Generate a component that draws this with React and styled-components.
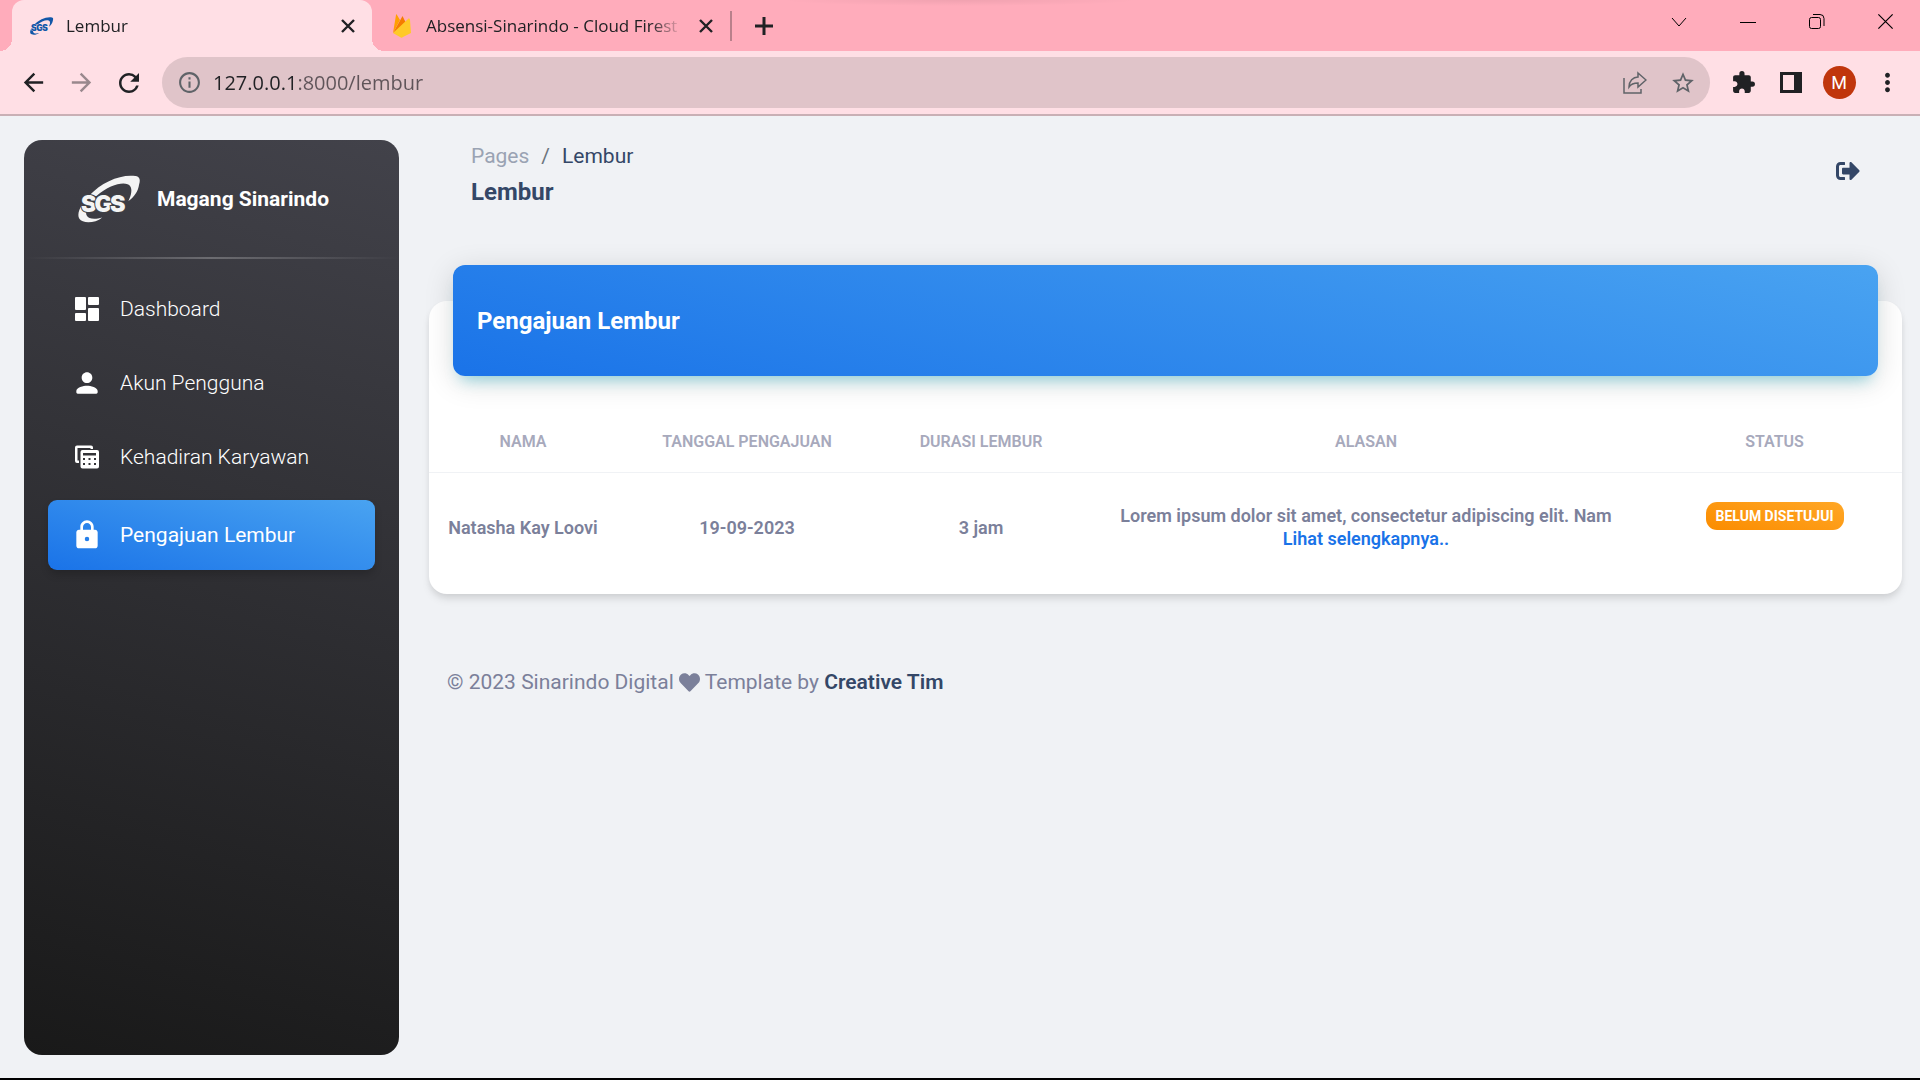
import React from 'react'
import styled, { createGlobalStyle, css } from 'styled-components'
import {
  MdArrowBack,
  MdArrowForward,
  MdRefresh,
  MdInfoOutline,
  MdStarOutline,
  MdExtension,
  MdMoreVert,
} from 'react-icons/md'
import { FaHeart, FaSignOutAlt } from 'react-icons/fa'

const GlobalStyle = createGlobalStyle`
  * {
    box-sizing: border-box;
  }

  body {
    background: #f0f2f5;
    font-family: Roboto, 'Liberation Sans', sans-serif;
    margin: 0;
  }

  button,
  input {
    background: none;
    border: 0;
    color: inherit;
    font-family: inherit;
    padding: 0;
  }

  a {
    color: inherit;
    text-decoration: none;
  }
`

const Window = styled.div`
  border-bottom: 2px solid #000;
  display: flex;
  flex-direction: column;
  min-height: 100vh;
`

/* Browser chrome */

const TabStrip = styled.div`
  background:
    radial-gradient(
      ellipse 180px 6px at 50% 0,
      rgba(0, 0, 0, 0.06),
      transparent
    ),
    #ffacbb;
  color: #202124;
  display: flex;
  font-family: 'Open Sans', 'Noto Sans', sans-serif;
  height: 51px;
  padding-left: 12px;
`

const Tab = styled.div`
  align-items: center;
  display: flex;
  gap: 12px;
  padding: 0 12px 0 18px;
  position: relative;
  width: ${({ $active }) => ($active ? 360 : 358)}px;

  ${({ $active }) =>
    $active &&
    css`
      background: #ffdfe5;
      border-radius: 12px 12px 0 0;

      &::before,
      &::after {
        bottom: 0;
        content: '';
        height: 12px;
        position: absolute;
        width: 12px;
      }

      &::before {
        background: radial-gradient(circle at 0 0, #ffacbb 12px, #ffdfe5 12px);
        right: 100%;
      }

      &::after {
        background: radial-gradient(
          circle at 100% 0,
          #ffacbb 12px,
          #ffdfe5 12px
        );
        left: 100%;
      }
    `}
`

const TabTitle = styled.span`
  flex: 1;
  font-size: 17px;
  mask-image: linear-gradient(to left, transparent, #000 32px);
  white-space: nowrap;
`

const TabClose = styled.button`
  display: flex;
  padding: 4px;
`

const TabDivider = styled.div`
  align-self: center;
  background: #b9808b;
  height: 30px;
  width: 2px;
`

const NewTab = styled.button`
  align-items: center;
  display: flex;
  justify-content: center;
  width: 64px;
`

const WindowControls = styled.div`
  color: #000;
  display: flex;
  margin-left: auto;
`

const WindowButton = styled.button`
  align-items: center;
  display: flex;
  height: 43px;
  justify-content: center;
  width: 69px;
`

const Toolbar = styled.div`
  align-items: center;
  background: #ffdfe5;
  border-bottom: 2px solid #c9b0b5;
  color: #202124;
  display: flex;
  font-family: 'Open Sans', 'Noto Sans', sans-serif;
  height: 65px;
  padding: 0 9px;
`

const ToolButton = styled.button`
  align-items: center;
  display: flex;
  flex-shrink: 0;
  height: 48px;
  justify-content: center;
  opacity: ${({ disabled }) => (disabled ? 0.45 : 1)};
  width: 48px;
`

const AddressBar = styled.form`
  align-items: center;
  background: #e0c4c9;
  border-radius: 26px;
  color: #5f6368;
  display: flex;
  flex: 1;
  height: 51px;
  margin: 0 9px;
  padding: 0 3px;
`

const AddressInput = styled.input`
  background: linear-gradient(to right, #202124 80px, #5f5459 80px);
  background-clip: text;
  -webkit-text-fill-color: transparent;
  flex: 1;
  font-size: 20px;
  min-width: 0;
  outline: 0;
`

const Avatar = styled.span`
  background: #c0360c;
  border-radius: 50%;
  color: #fff;
  font-family: Roboto, sans-serif;
  font-size: 18px;
  height: 33px;
  line-height: 33px;
  width: 33px;
`

/* Page */

const Page = styled.div`
  display: flex;
  flex: 1;
  padding: 24px 18px 23px 24px;
`

const Sidebar = styled.aside`
  background: linear-gradient(195deg, #42424a, #191919);
  border-radius: 18px;
  color: #fff;
  flex-shrink: 0;
  width: 375px;
`

const Brand = styled.a`
  align-items: center;
  display: flex;
  font-size: 21px;
  font-weight: 700;
  gap: 15px;
  height: 117px;
  padding-left: 54px;
`

const SidebarDivider = styled.hr`
  background: linear-gradient(90deg, transparent, #fff, transparent);
  border: 0;
  height: 2px;
  margin: 0 0 15px;
  opacity: 0.25;
`

const Nav = styled.nav`
  display: flex;
  flex-direction: column;
  gap: 4px;
  padding: 0 24px;
`

const NavItem = styled.a`
  align-items: center;
  border-radius: 9px;
  display: flex;
  font-size: 21px;
  font-weight: ${({ $active }) => ($active ? 400 : 300)};
  gap: 17px;
  height: 70px;
  padding-left: 23px;

  ${({ $active }) =>
    $active &&
    css`
      background: linear-gradient(195deg, #49a3f1, #1a73e8);
      box-shadow: 0 5px 8px -1px rgba(0, 0, 0, 0.2);
      margin-top: 4px;
    `}
`

const Main = styled.main`
  flex: 1;
  margin-left: 30px;
  min-width: 0;
`

const TopBar = styled.header`
  align-items: center;
  color: #344767;
  display: flex;
  justify-content: space-between;
  padding: 0 42px;
`

const Breadcrumb = styled.nav`
  display: flex;
  font-size: 21px;
  gap: 12px;
  line-height: 32px;
`

const Muted = styled.a`
  color: #9aa3b3;
`

const Slash = styled.span`
  color: #6c757d;
`

const PageTitle = styled.h1`
  font-size: 24px;
  font-weight: 700;
  line-height: 40px;
  margin: 0;
`

const LogoutButton = styled.button`
  display: flex;
  padding-bottom: 10px;
`

const Card = styled.section`
  background: #fff;
  border-radius: 18px;
  box-shadow:
    0 6px 9px -1px rgba(0, 0, 0, 0.1),
    0 3px 6px -1px rgba(0, 0, 0, 0.06);
  margin-top: 89px;
  padding-bottom: 12px;
`

const CardHeader = styled.div`
  background: linear-gradient(195deg, #49a3f1, #1a73e8);
  border-radius: 12px;
  box-shadow:
    0 6px 30px 0 rgba(0, 0, 0, 0.14),
    0 11px 15px -8px rgba(0, 188, 212, 0.4);
  color: #fff;
  margin: 0 24px;
  padding: 36px 24px 34px;
  position: relative;
  top: -36px;
`

const CardTitle = styled.h2`
  font-size: 24px;
  font-weight: 700;
  line-height: 41px;
  margin: 0;
`

const Table = styled.table`
  border-collapse: collapse;
  table-layout: fixed;
  text-align: center;
  width: 100%;
`

const Column = styled.col`
  width: ${({ $width }) => $width};
`

const HeaderCell = styled.th`
  border-bottom: 1px solid #f0f2f5;
  color: #a7a9bc;
  font-size: 16px;
  font-weight: 600;
  height: 60px;
  padding: 0;
  text-transform: uppercase;
`

const Cell = styled.td`
  color: #7b809a;
  font-size: 18px;
  font-weight: 600;
  height: 110px;
  line-height: 23px;
  padding: 0 12px;
`

const MoreLink = styled.a`
  color: #1a73e8;
  display: block;
`

const Badge = styled.span`
  background: linear-gradient(195deg, #ffa726, #fb8c00);
  border-radius: 11px;
  color: #fff;
  display: inline-block;
  font-size: 14px;
  font-weight: 700;
  line-height: 28px;
  margin-bottom: 23px;
  padding: 0 10px;
  text-transform: uppercase;
`

const Footer = styled.footer`
  align-items: center;
  color: #7b809a;
  display: flex;
  font-size: 21px;
  gap: 5px;
  line-height: 32px;
  padding: 72px 18px 0;
`

const FooterLink = styled.a`
  color: #344767;
  font-weight: 600;
`

const Cross = ({ size, strokeWidth }) => (
  <svg
    fill="none"
    height={size}
    stroke="currentColor"
    strokeWidth={strokeWidth}
    viewBox="0 0 16 16"
    width={size}
  >
    <path d="M2 2l12 12M14 2L2 14" />
  </svg>
)

const Logo = ({ color, outline, width, height }) => (
  <svg height={height} viewBox="0 0 66 50" width={width}>
    <path
      d="M11 22C24 8 42 0 57 1c6 0 8 3 6 9-1 7-5 13-11 17 3-6 4-12 2-15C50 6 34 9 19 22z"
      fill={color}
    />
    <path
      d="M4 31C0 38-2 45 5 48c5 2 14 1 20-4-7 2-14 2-16-2-1-2-1-5 1-8z"
      fill={color}
    />
    <text
      fill={color}
      fontFamily="Inter, sans-serif"
      fontSize="24"
      fontWeight="900"
      paintOrder="stroke"
      stroke={outline}
      strokeWidth="2"
    >
      <tspan x="3" y="38">
        S
      </tspan>
      <tspan x="17" y="38">
        G
      </tspan>
      <tspan x="33" y="38">
        S
      </tspan>
    </text>
  </svg>
)

const Firebase = () => (
  <svg height="24" viewBox="-3 0 24 24" width="24">
    <path d="M0 19L3 1c0-1 1-1 1 0l3 5z" fill="#ffa000" />
    <path d="M0 19L9 3c0-1 1-1 1 0l3 6z" fill="#f57c00" />
    <path
      d="M0 19L15 5c1-1 2 0 2 1l1 13-8 4c-1 1-2 1-3 0z"
      fill="#ffca28"
    />
  </svg>
)

const DashboardIcon = () => (
  <svg fill="currentColor" height="32" viewBox="0 0 32 32" width="32">
    <rect height="13" rx="1" width="11" x="4" y="4" />
    <rect height="8" rx="1" width="11" x="4" y="20" />
    <rect height="8" rx="1" width="11" x="17" y="4" />
    <rect height="13" rx="1" width="11" x="17" y="15" />
  </svg>
)

const PersonIcon = () => (
  <svg fill="currentColor" height="32" viewBox="0 0 24 24" width="32">
    <path d="M12 12c2.21 0 4-1.79 4-4s-1.79-4-4-4-4 1.79-4 4 1.79 4 4 4zm0 2c-2.67 0-8 1.34-8 4v1c0 .55.45 1 1 1h14c.55 0 1-.45 1-1v-1c0-2.66-5.33-4-8-4z" />
  </svg>
)

const TableIcon = () => (
  <svg fill="currentColor" height="32" viewBox="0 0 32 32" width="32">
    <path d="M7 22H6a2 2 0 0 1-2-2V6.500a2 2 0 0 1 2-2h14a2 2 0 0 1 2 2V8h-2.500V7H6.500v12.500H8V22z" />
    <path
      clipRule="evenodd"
      d="M11.500 9H26a2 2 0 0 1 2 2v14.500a2 2 0 0 1-2 2H11.500a2 2 0 0 1-2-2V11a2 2 0 0 1 2-2zM12 12v2.500h13V12zM12 17v2h2v-2zM17.500 17v2h2v-2zM23 17v2h2v-2zM12 22v2h2v-2zM17.500 22v2h2v-2zM23 22v2h2v-2z"
      fillRule="evenodd"
    />
  </svg>
)

const LockIcon = () => (
  <svg fill="currentColor" height="32" viewBox="0 0 24 24" width="32">
    <path d="M18 8h-1V6c0-2.760-2.240-5-5-5S7 3.240 7 6v2H6c-1.100 0-2 .9-2 2v10c0 1.100.9 2 2 2h12c1.100 0 2-.9 2-2V10c0-1.100-.9-2-2-2zm-6 8.700a1.700 1.700 0 1 1 0-3.400 1.700 1.700 0 0 1 0 3.400zM9 8V6c0-1.660 1.340-3 3-3s3 1.340 3 3v2H9z" />
  </svg>
)

const navItems = [
  { label: 'Dashboard', icon: DashboardIcon },
  { label: 'Akun Pengguna', icon: PersonIcon },
  { label: 'Kehadiran Karyawan', icon: TableIcon },
  { label: 'Pengajuan Lembur', icon: LockIcon, active: true },
]

const columns = [
  { label: 'Nama', width: '188px' },
  { label: 'Tanggal Pengajuan', width: '260px' },
  { label: 'Durasi Lembur', width: '208px' },
  { label: 'Alasan', width: 'auto' },
  { label: 'Status', width: '255px' },
]

const requests = [
  {
    name: 'Natasha Kay Loovi',
    date: '19-09-2023',
    duration: '3 jam',
    reason: 'Lorem ipsum dolor sit amet, consectetur adipiscing elit. Nam',
    status: 'Belum disetujui',
  },
]

const BrowserTabs = () => (
  <TabStrip>
    <Tab $active>
      <Logo color="#1257a8" height={24} outline="#ffdfe5" width={24} />
      <TabTitle>Lembur</TabTitle>
      <TabClose aria-label="Close tab">
        <Cross size={16} strokeWidth={2.4} />
      </TabClose>
    </Tab>
    <Tab>
      <Firebase />
      <TabTitle>Absensi-Sinarindo - Cloud Firest</TabTitle>
      <TabClose aria-label="Close tab">
        <Cross size={16} strokeWidth={2.4} />
      </TabClose>
    </Tab>
    <TabDivider />
    <NewTab aria-label="New tab">
      <svg height="18" stroke="currentColor" strokeWidth="3" width="18">
        <path d="M9 0v18M0 9h18" />
      </svg>
    </NewTab>
    <WindowControls>
      <WindowButton aria-label="Search tabs">
        <svg fill="none" height="16" stroke="currentColor" width="16">
          <path d="M1 4l7 8 7-8" />
        </svg>
      </WindowButton>
      <WindowButton aria-label="Minimize">
        <svg height="16" stroke="currentColor" width="16">
          <path d="M0 8.500h16" />
        </svg>
      </WindowButton>
      <WindowButton aria-label="Restore">
        <svg fill="none" height="16" stroke="currentColor" width="16">
          <rect height="11" rx="2" width="11" x="0.500" y="3.500" />
          <path d="M4 0.500h7a4 4 0 0 1 4 4V12" />
        </svg>
      </WindowButton>
      <WindowButton aria-label="Close">
        <Cross size={19} strokeWidth={1} />
      </WindowButton>
    </WindowControls>
  </TabStrip>
)

const BrowserToolbar = () => (
  <Toolbar>
    <ToolButton aria-label="Back">
      <MdArrowBack size={29} />
    </ToolButton>
    <ToolButton aria-label="Forward" disabled>
      <MdArrowForward size={29} />
    </ToolButton>
    <ToolButton aria-label="Reload">
      <MdRefresh size={30} />
    </ToolButton>
    <AddressBar>
      <ToolButton aria-label="Site information" type="button">
        <MdInfoOutline size={25} />
      </ToolButton>
      <AddressInput
        aria-label="Address"
        defaultValue="127.0.0.1:8000/lembur"
        type="text"
      />
      <ToolButton aria-label="Share" type="button">
        <svg
          fill="none"
          height="24"
          stroke="currentColor"
          strokeWidth="1.5"
          width="24"
        >
          <path d="M1 7v15h17v-4" />
          <path d="M15 2l8 7-8 7v-4c-4 0-7 1-9 4 0-6 4-10 9-10z" />
        </svg>
      </ToolButton>
      <ToolButton aria-label="Bookmark" type="button">
        <MdStarOutline size={26} />
      </ToolButton>
    </AddressBar>
    <ToolButton aria-label="Extensions">
      <MdExtension size={25} />
    </ToolButton>
    <ToolButton aria-label="Side panel">
      <svg fill="currentColor" height="21" width="22">
        <path d="M0 0h22v21H0zM3 3v15h11V3z" fillRule="evenodd" />
      </svg>
    </ToolButton>
    <ToolButton aria-label="Profile">
      <Avatar>M</Avatar>
    </ToolButton>
    <ToolButton aria-label="Menu">
      <MdMoreVert size={29} />
    </ToolButton>
  </Toolbar>
)

const SideMenu = () => (
  <Sidebar>
    <Brand href="#">
      <Logo color="#f4f4f4" height={50} outline="#3f4046" width={64} />
      Magang Sinarindo
    </Brand>
    <SidebarDivider />
    <Nav>
      {navItems.map(({ label, icon: Icon, active }) => (
        <NavItem $active={active} href="#" key={label}>
          <Icon />
          {label}
        </NavItem>
      ))}
    </Nav>
  </Sidebar>
)

const OvertimeCard = () => (
  <Card>
    <CardHeader>
      <CardTitle>Pengajuan Lembur</CardTitle>
    </CardHeader>
    <Table>
      <colgroup>
        {columns.map(({ label, width }) => (
          <Column $width={width} key={label} />
        ))}
      </colgroup>
      <thead>
        <tr>
          {columns.map(({ label }) => (
            <HeaderCell key={label}>{label}</HeaderCell>
          ))}
        </tr>
      </thead>
      <tbody>
        {requests.map(({ name, date, duration, reason, status }) => (
          <tr key={name}>
            <Cell>{name}</Cell>
            <Cell>{date}</Cell>
            <Cell>{duration}</Cell>
            <Cell>
              {reason}
              <MoreLink href="#">Lihat selengkapnya..</MoreLink>
            </Cell>
            <Cell>
              <Badge>{status}</Badge>
            </Cell>
          </tr>
        ))}
      </tbody>
    </Table>
  </Card>
)

const App = () => (
  <>
    <GlobalStyle />
    <Window>
      <BrowserTabs />
      <BrowserToolbar />
      <Page>
        <SideMenu />
        <Main>
          <TopBar>
            <div>
              <Breadcrumb>
                <Muted href="#">Pages</Muted>
                <Slash>/</Slash>
                <span>Lembur</span>
              </Breadcrumb>
              <PageTitle>Lembur</PageTitle>
            </div>
            <LogoutButton aria-label="Log out">
              <FaSignOutAlt size={24} />
            </LogoutButton>
          </TopBar>
          <OvertimeCard />
          <Footer>
            <span>© 2023 Sinarindo Digital</span>
            <FaHeart size={21} />
            <span>
              Template by <FooterLink href="#">Creative Tim</FooterLink>
            </span>
          </Footer>
        </Main>
      </Page>
    </Window>
  </>
)

export default App
